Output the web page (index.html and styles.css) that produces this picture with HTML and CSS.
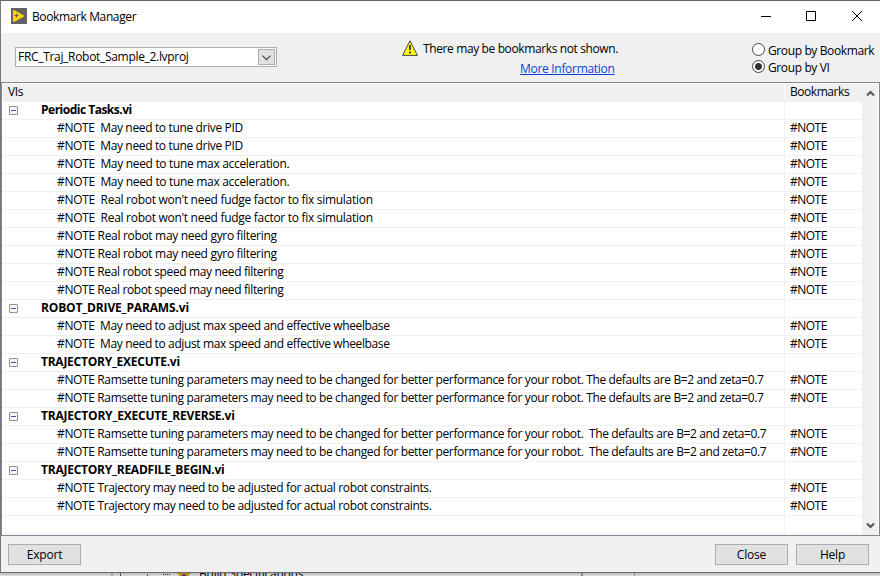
FILE: index.html
```
<!DOCTYPE html>
<html lang="en">
<head>
<meta charset="utf-8">
<title>Bookmark Manager</title>
<link rel="stylesheet" href="styles.css">
</head>
<body>
<div class="backdrop-top"></div>
<main class="window">
  <header class="titlebar">
    <svg class="app-icon" width="16" height="16" viewBox="0 0 16 16"><rect width="16" height="16" fill="#626265"/><path d="M2 2.3 L3 2 L13 7.4 L13 8.4 L3 14 L2 13.6Z" fill="#ffd200"/><path d="M3.5 7.5h4M5.5 5.5v4" stroke="#58585a" fill="none"/></svg>
    <h1 class="title">Bookmark Manager</h1>
    <svg class="controls" width="101" height="12" viewBox="0 0 101 12" fill="none" stroke="#000"><path d="M0 6.5h10M45.5 1.5h9v9h-9zM91 1l10 10M101 1l-10 10"/></svg>
  </header>
  <section class="toolbar">
    <div class="select"><span class="select-text">FRC_Traj_Robot_Sample_2.lvproj</span><span class="select-btn"><svg width="9" height="6" viewBox="0 0 9 6" fill="none" stroke="#444" stroke-width="1.2"><path d="M.5 .7l4 4 4-4"/></svg></span></div>
    <svg class="warning" width="16" height="16" viewBox="0 0 16 16"><path d="M8 .8L15.4 15.4H.6Z" fill="#ff0" stroke="#444"/><path d="M7 5h2v5H7zM7 11.5h2v2H7z" fill="#444"/></svg>
    <div class="notice"><span class="notice-text">There may be bookmarks not shown.</span><a class="more">More Information</a></div>
    <div class="radios"><label class="radio"><i class="dot"></i><span>Group by Bookmark</span></label><label class="radio"><i class="dot on"></i><span>Group by VI</span></label></div>
  </section>
  <section class="panel">
    <div class="table" id="table">
      <div class="head"><div class="cell">VIs</div><div class="mark">Bookmarks</div></div>
    </div>
    <div class="scroll">
      <svg width="9" height="7" viewBox="0 0 9 7" fill="none" stroke="#555" stroke-width="2"><path d="M1 5.5l3.5-3.5 3.5 3.5"/></svg>
      <svg width="9" height="7" viewBox="0 0 9 7" fill="none" stroke="#555" stroke-width="2"><path d="M1 1.5l3.5 3.5 3.5-3.5"/></svg>
    </div>
  </section>
  <footer class="footer"><button class="btn export">Export</button><button class="btn">Close</button><button class="btn">Help</button></footer>
</main>
<div class="backdrop-bottom">
  <div class="behind-left"></div>
  <svg class="behind-tree" width="84" height="4" viewBox="0 0 84 4"><path d="M0 0h1v4H0zM27 1h1v3h-1z" fill="#555"/><path d="M43 1.5h8" stroke="#333" stroke-dasharray="1 1"/><path d="M57 0h14l-3 3h-8z" fill="#b8860b"/><path d="M61 4l3-3 3 3z" fill="#1a1ae0"/></svg>
  <span class="behind">Build Specifications</span>
  <div class="behind-right"></div>
</div>
<script src="rows.js"></script>
</body>
</html>
```
FILE: rows.js
```
const ramsette = '#NOTE Ramsette tuning parameters may need to be changed for better performance for your robot.';
// Each entry is [text, letter spacing in px, nested notes].
const groups = [
  ['Periodic Tasks.vi', -0.5, [
    ['#NOTE  May need to tune drive PID', -0.35],
    ['#NOTE  May need to tune max acceleration.', -0.32],
    ["#NOTE  Real robot won't need fudge factor to fix simulation", -0.29],
    ['#NOTE Real robot may need gyro filtering', -0.32],
    ['#NOTE Real robot speed may need filtering', -0.37]]],
  ['ROBOT_DRIVE_PARAMS.vi', -0.15, [['#NOTE  May need to adjust max speed and effective wheelbase', -0.37]]],
  ['TRAJECTORY_EXECUTE.vi', -0.25, [[ramsette + ' The defaults are B=2 and zeta=0.7', -0.37]]],
  ['TRAJECTORY_EXECUTE_REVERSE.vi', -0.2, [[ramsette + '  The defaults are B=2 and zeta=0.7', -0.37]]],
  ['TRAJECTORY_READFILE_BEGIN.vi', -0.24, [['#NOTE Trajectory may need to be adjusted for actual robot constraints.', -0.35]]]
];
const table = document.getElementById('table');
function addRow(kind, text, spacing, mark) {
  const row = document.createElement('div');
  row.className = 'row ' + kind;
  const cell = document.createElement('div');
  cell.className = 'cell';
  if (kind === 'group') {
    const box = document.createElement('i');
    box.className = 'toggle';
    cell.append(box);
  }
  const label = document.createElement('span');
  label.textContent = text;
  label.style.letterSpacing = spacing + 'px';
  cell.append(label);
  const right = document.createElement('div');
  right.className = 'mark';
  right.textContent = mark;
  row.append(cell, right);
  table.append(row);
}
for (const [name, spacing, notes] of groups) {
  addRow('group', name, spacing, '');
  for (const [note, noteSpacing] of notes) {
    addRow('note', note, noteSpacing, '#NOTE');
    addRow('note', note, noteSpacing, '#NOTE');
  }
}
addRow('note', '', 0, '');
```
FILE: styles.css
```
* { box-sizing: border-box; }
body { margin: 0; width: 880px; height: 576px; overflow: hidden; background: #77787a; font: 12px/18px "Open Sans", "Noto Sans", sans-serif; letter-spacing: -0.38px; color: #000; }
.backdrop-top { height: 1px; background: #66666a; }
.window { margin-left: 1px; width: 879px; height: 572px; background: #f0f0f0; border-bottom: 1px solid #6e6e70; display: flex; flex-direction: column; }
.titlebar { height: 32px; background: #fff; display: flex; align-items: center; padding: 0 18px 2px 10px; }
.app-icon { margin-right: 5px; }
.title { margin: 2px 0 0; font-size: 12px; font-weight: 400; flex: 1; }
.controls { overflow: visible; }
.toolbar { height: 49px; display: flex; align-items: flex-start; padding-left: 14px; }
.select { margin-top: 14px; width: 262px; height: 20px; border: 1px solid #abadb3; background: #fff; display: flex; justify-content: space-between; padding: 1px 1px 1px 2px; line-height: 16px; letter-spacing: -0.31px; }
.select-btn { width: 17px; height: 16px; border: 1px solid #adadad; background: #e1e1e1; display: flex; align-items: center; justify-content: center; padding-top: 2px; }
.warning { margin: 7px 0 0 125px; }
.notice { margin: 7px 0 0 5px; width: 210px; display: flex; flex-direction: column; white-space: nowrap; }
.notice-text { line-height: 18px; }
.more { color: #0b43d6; text-decoration: underline; margin-left: 97px; line-height: 22px; letter-spacing: -0.3px; }
.radios { margin: 9px 0 0 119px; line-height: 18px; white-space: nowrap; }
.radio { display: flex; height: 17px; gap: 3px; }
.dot { width: 13px; height: 13px; margin-top: 1px; border: 1px solid #444; border-radius: 50%; background: #fff; }
.dot.on { background: radial-gradient(circle, #333 3px, #fff 4px); }
.panel { height: 454px; border: 1px solid #828790; display: flex; background: #fff; padding: 1px 1px 0; }
.table { width: 859px; }
.head, .row { display: flex; height: 18px; border-bottom: 1px solid #f0f0f0; line-height: 16px; }
.head { background: #f0f0f0; }
.cell { width: 782px; border-right: 1px solid #f0f0f0; white-space: pre; display: flex; }
.head .cell { padding-left: 5px; border-right-color: #fff; }
.mark { padding-left: 5px; letter-spacing: -0.5px; }
.head .mark { letter-spacing: -0.45px; }
.note .cell { padding-left: 54px; }
.group .cell { padding-left: 5px; font-weight: 700; }
.toggle { width: 9px; height: 9px; margin: 4px 23px 0 1px; border: 1px solid #919191; border-radius: 1px; background: linear-gradient(#3b5da8, #3b5da8) center / 5px 1px no-repeat #f6f6f6; }
.scroll { width: 16px; background: #f0f0f0; display: flex; flex-direction: column; justify-content: space-between; align-items: center; padding: 6px 0; }
.footer { display: flex; gap: 8px; padding: 8px 11px 0 7px; }
.btn { width: 73px; height: 21px; border: 1px solid #adadad; background: #e1e1e1; color: #000; font: inherit; letter-spacing: -0.2px; line-height: 18px; padding: 0; }
.export { margin-right: auto; }
.backdrop-bottom { height: 3px; background: linear-gradient(#b8b8b8, #dedede); overflow: hidden; display: flex; }
.behind-left { width: 113px; border-right: 2px solid #a5a5a5; margin-right: 7px; }
.behind-tree { margin-right: -5px; }
.behind { margin-top: -8px; line-height: 18px; width: 382px; letter-spacing: -0.2px; }
.behind-right { width: 54px; border-left: 2px solid #85858d; border-right: 1px solid #909090; }
```
